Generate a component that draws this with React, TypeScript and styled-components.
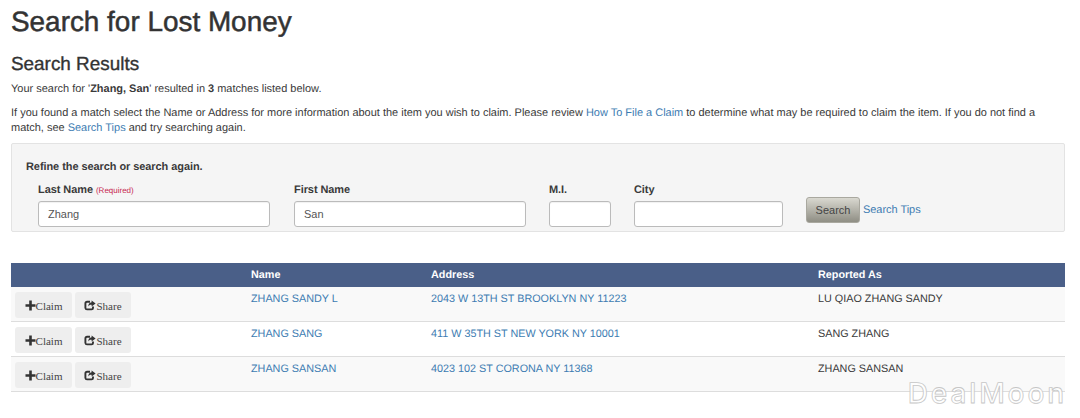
import React from "react";
import styled, { createGlobalStyle } from "styled-components";

const Global = createGlobalStyle`
  html, body { margin: 0; padding: 0; background: #fff; }
  body { font-family: "Liberation Sans", Arial, sans-serif; color: #3a3a3a; font-size: 10.97px; line-height: 15px; text-rendering: geometricPrecision; }
`;
const Page = styled.div`
  position: relative;
  width: 1080px;
  height: 418px;
  overflow: hidden;
  box-sizing: border-box;
  padding: 5px 15px 0 11px;
`;
const Title = styled.h1`
  margin: 0;
  font-size: 27.9px;
  line-height: 33px;
  font-weight: 400;
  color: #333;
  -webkit-text-stroke: 0.5px #333;
`;
const Subtitle = styled.h2`
  margin: 17px 0 0;
  font-size: 18.9px;
  line-height: 20px;
  font-weight: 400;
  color: #333;
  -webkit-text-stroke: 0.35px #333;
`;
const Paragraph = styled.p<{ $top: number }>`
  margin: ${(p) => p.$top}px 0 0;
`;
const Link = styled.a`
  color: #3d7cb2;
  text-decoration: none;
`;
const Well = styled.section`
  box-sizing: border-box;
  height: 89px;
  margin-top: 7px;
  padding: 16px 14px 0;
  background: #f5f5f5;
  border: 1px solid #e3e3e3;
  border-radius: 2px;
`;
const WellTitle = styled.div`
  font-weight: 700;
  line-height: 15px;
  letter-spacing: -0.06px;
`;
const Fields = styled.div`
  display: flex;
  align-items: flex-end;
  margin: 8px 0 0 12px;
`;
const Field = styled.label<{ $w: number; $gap: number }>`
  display: flex;
  flex-direction: column;
  width: ${(p) => p.$w}px;
  margin-right: ${(p) => p.$gap}px;
`;
const FieldLabel = styled.span`
  font-weight: 700;
  line-height: 15px;
  height: 15px;
  margin-bottom: 3px;
  white-space: nowrap;
  letter-spacing: -0.06px;
`;
const Required = styled.small`
  font-weight: 400;
  font-size: 8px;
  letter-spacing: 0;
  color: #c7254e;
`;
const Input = styled.input`
  box-sizing: border-box;
  width: 100%;
  height: 26px;
  padding: 0 9px;
  border: 1px solid #bbb;
  border-radius: 3px;
  background: #fff;
  font: 10.97px "Liberation Sans", Arial, sans-serif;
  color: #555;
  box-shadow: inset 0 1px 1px rgba(0, 0, 0, 0.06);
`;
const SearchGroup = styled.div`
  display: flex;
  align-items: center;
  margin: 0 0 4px 0;
  gap: 3px;
  letter-spacing: -0.03px;
`;
const SearchButton = styled.button`
  box-sizing: border-box;
  width: 54px;
  height: 26px;
  padding: 0;
  border: 1px solid #a9a89f;
  border-radius: 3px;
  background: linear-gradient(#d9d8d0, #8f8e84);
  font: 10.97px "Liberation Sans", Arial, sans-serif;
  color: #444;
`;
const Results = styled.table`
  width: 1054px;
  margin-top: 31px;
  border-collapse: separate;
  border-spacing: 0;
  table-layout: fixed;
`;
const HeadRow = styled.tr`
  height: 24px;
  background: #4a5f88;
`;
const HeadCell = styled.th<{ $w: number }>`
  width: ${(p) => p.$w}px;
  padding: 0;
  text-align: left;
  font-size: 10.8px;
  font-weight: 700;
  color: #fff;
`;
const Row = styled.tr<{ $striped: boolean }>`
  background: ${(p) => (p.$striped ? "#f9f9f9" : "#fff")};
`;
const Cell = styled.td`
  box-sizing: border-box;
  height: 35px;
  padding: 5px 0 0;
  vertical-align: top;
  font-size: 10.8px;
  line-height: 15px;
  white-space: nowrap;
  border-bottom: 1px solid #ddd;
`;
const ActionCell = styled(Cell)`
  padding: 5px 0 0 4px;
`;
const Actions = styled.div`
  display: flex;
  gap: 3px;
`;
const ActionButton = styled.button<{ $w: number }>`
  display: flex;
  align-items: center;
  justify-content: center;
  box-sizing: border-box;
  width: ${(p) => p.$w}px;
  height: 26px;
  padding: 2px 0 0;
  border: 0;
  border-radius: 3px;
  background: #eee;
  color: #444;
  font: 11px "Liberation Serif", "Times New Roman", serif;
  svg { display: block; flex: none; margin-top: -2px; }
`;
const Watermark = styled.div`
  position: absolute;
  right: 13px;
  top: 377px;
  font-family: Inter, "Liberation Sans", sans-serif;
  font-size: 28px;
  line-height: 32px;
  font-weight: 500;
  letter-spacing: 2.9px;
  color: rgba(255, 255, 255, 0.95);
  -webkit-text-stroke: 0.8px #c6c6c6;
`;

const PlusIcon = () => (
  <svg width="11" height="11" viewBox="0 0 11 11" aria-hidden="true">
    <path d="M4.2 0.5h2.6v3.7h3.7v2.6H6.8v3.7H4.2V6.8H0.5V4.2h3.7z" fill="#333" />
  </svg>
);
const ShareIcon = () => (
  <svg width="12" height="11" viewBox="0 0 12 11" aria-hidden="true">
    <path
      d="M9 6.6V8a1.4 1.4 0 0 1-1.4 1.4H3A1.6 1.6 0 0 1 1.4 8V3.4A1.6 1.6 0 0 1 3 1.8h3"
      fill="none"
      stroke="#333"
      strokeWidth="1.9"
    />
    <path d="M7.6 0.4 11.6 3.4 7.6 6.4V4.7C6 4.6 4.9 5.2 4.2 6.6 4.2 4.2 5.5 2.4 7.6 2.2z" fill="#333" />
  </svg>
);

const rows = [
  { name: "ZHANG SANDY L", address: "2043 W 13TH ST BROOKLYN NY 11223", reported: "LU QIAO ZHANG SANDY" },
  { name: "ZHANG SANG", address: "411 W 35TH ST NEW YORK NY 10001", reported: "SANG ZHANG" },
  { name: "ZHANG SANSAN", address: "4023 102 ST CORONA NY 11368", reported: "ZHANG SANSAN" },
];

export default function App() {
  return (
    <Page>
      <Global />
      <Title>Search for Lost Money</Title>
      <Subtitle>Search Results</Subtitle>
      <Paragraph $top={7}>
        Your search for '<b>Zhang, San</b>' resulted in <b>3</b> matches listed below.
      </Paragraph>
      <Paragraph $top={9}>
        If you found a match select the Name or Address for more information about the item you wish to claim. Please
        review <Link>How To File a Claim</Link> to determine what may be required to claim the item. If you do not find
        a match, see <Link>Search Tips</Link> and try searching again.
      </Paragraph>
      <Well>
        <WellTitle>Refine the search or search again.</WellTitle>
        <Fields>
          <Field $w={232} $gap={24}>
            <FieldLabel>
              Last Name <Required>(Required)</Required>
            </FieldLabel>
            <Input defaultValue="Zhang" />
          </Field>
          <Field $w={232} $gap={23}>
            <FieldLabel>First Name</FieldLabel>
            <Input defaultValue="San" />
          </Field>
          <Field $w={62} $gap={23}>
            <FieldLabel>M.I.</FieldLabel>
            <Input />
          </Field>
          <Field $w={149} $gap={23}>
            <FieldLabel>City</FieldLabel>
            <Input />
          </Field>
          <SearchGroup>
            <SearchButton>Search</SearchButton>
            <Link>Search Tips</Link>
          </SearchGroup>
        </Fields>
      </Well>
      <Results>
        <thead>
          <HeadRow>
            <HeadCell $w={240} />
            <HeadCell $w={180}>Name</HeadCell>
            <HeadCell $w={387}>Address</HeadCell>
            <HeadCell $w={247}>Reported As</HeadCell>
          </HeadRow>
        </thead>
        <tbody>
          {rows.map((r, i) => (
            <Row key={r.name} $striped={i % 2 === 0}>
              <ActionCell>
                <Actions>
                  <ActionButton $w={57}>
                    <PlusIcon />
                    Claim
                  </ActionButton>
                  <ActionButton $w={56}>
                    <ShareIcon />
                    Share
                  </ActionButton>
                </Actions>
              </ActionCell>
              <Cell>
                <Link>{r.name}</Link>
              </Cell>
              <Cell>
                <Link>{r.address}</Link>
              </Cell>
              <Cell>{r.reported}</Cell>
            </Row>
          ))}
        </tbody>
      </Results>
      <Watermark>DealMoon</Watermark>
    </Page>
  );
}
